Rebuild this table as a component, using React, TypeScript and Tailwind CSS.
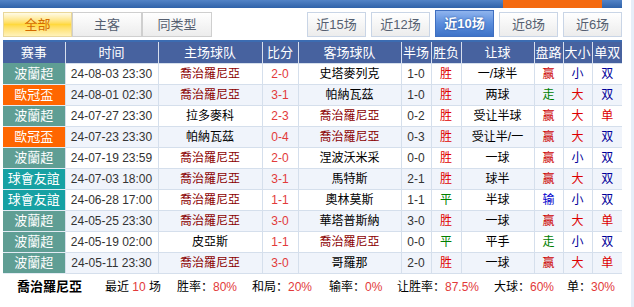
import React from "react";

type Row = {
    league: string;
    time: string;
    home: string;
    score: string;
    away: string;
    half: string;
    result: string;
    handicap: string;
    pan: string;
    size: string;
    oe: string;
};

const TEAM = "喬治羅尼亞";

const rows: Row[] = [
    { league: "波蘭超", time: "24-08-03 23:30", home: TEAM, score: "2-0", away: "史塔麥列克", half: "1-0", result: "胜", handicap: "一/球半", pan: "赢", size: "小", oe: "双" },
    { league: "歐冠盃", time: "24-08-01 02:30", home: TEAM, score: "3-1", away: "帕納瓦茲", half: "1-0", result: "胜", handicap: "两球", pan: "走", size: "大", oe: "双" },
    { league: "波蘭超", time: "24-07-27 23:30", home: "拉多麥科", score: "2-3", away: TEAM, half: "0-2", result: "胜", handicap: "受让半球", pan: "赢", size: "大", oe: "单" },
    { league: "歐冠盃", time: "24-07-23 23:30", home: "帕納瓦茲", score: "0-4", away: TEAM, half: "0-3", result: "胜", handicap: "受让半/一", pan: "赢", size: "大", oe: "双" },
    { league: "波蘭超", time: "24-07-19 23:59", home: TEAM, score: "2-0", away: "涅波沃米采", half: "0-0", result: "胜", handicap: "一球", pan: "赢", size: "小", oe: "双" },
    { league: "球會友誼", time: "24-07-03 18:00", home: TEAM, score: "3-1", away: "馬特斯", half: "2-1", result: "胜", handicap: "球半", pan: "赢", size: "大", oe: "双" },
    { league: "球會友誼", time: "24-06-28 17:00", home: TEAM, score: "1-1", away: "奧林莫斯", half: "1-1", result: "平", handicap: "半球", pan: "输", size: "小", oe: "双" },
    { league: "波蘭超", time: "24-05-25 23:30", home: TEAM, score: "3-0", away: "華塔普斯納", half: "3-0", result: "胜", handicap: "一球", pan: "赢", size: "大", oe: "单" },
    { league: "波蘭超", time: "24-05-19 02:00", home: "皮亞斯", score: "1-1", away: TEAM, half: "0-0", result: "平", handicap: "平手", pan: "走", size: "小", oe: "双" },
    { league: "波蘭超", time: "24-05-11 23:30", home: TEAM, score: "3-0", away: "哥羅那", half: "2-0", result: "胜", handicap: "一球", pan: "赢", size: "大", oe: "单" },
];

const leagueBg: Record<string, string> = {
    "波蘭超": "bg-[#5f9e94]",
    "歐冠盃": "bg-[#ff6600]",
    "球會友誼": "bg-[#16a1a3]",
};

const teamColor = (t: string) => (t === TEAM ? "text-[#8b0000]" : "text-black");
const resultColor = (r: string) => (r === "平" ? "text-[#008000]" : "text-[#e00000]");
const panColor = (p: string) =>
    p === "走" ? "text-[#008000]" : p === "输" ? "text-[#0000cc]" : "text-[#cc0000]";
const redBlue = (v: string, red: string) => (v === red ? "text-[#dd0000]" : "text-[#000099]");

const headers: [string, string][] = [
    ["赛事", "w-[62px]"],
    ["时间", "w-[93px]"],
    ["主场球队", "w-[104px]"],
    ["比分", "w-[36px]"],
    ["客场球队", "w-[103px]"],
    ["半场", "w-[30px]"],
    ["胜负", "w-[30px]"],
    ["让球", "w-[73px]"],
    ["盘路", "w-[29px]"],
    ["大小", "w-[29px]"],
    ["单双", "w-[30px]"],
];

const font = { fontFamily: '"Liberation Sans", Arial, "Noto Sans CJK SC", sans-serif' };

function Tab({ label, active, tone }: { label: string; active?: boolean; tone?: "yellow" | "blue" }) {
    if (active && tone === "yellow") {
        return (
            <div className="w-[69px] h-[25px] flex items-center justify-center border border-[#e9d79a] bg-gradient-to-b from-[#fffbe6] via-[#ffd93d] to-[#fff2b8] text-[#d46a00] text-[13px]">
                {label}
            </div>
        );
    }
    if (active) {
        return (
            <div className="w-[59px] h-[27px] -mt-[2px] flex items-center justify-center border border-[#3f6fc0] bg-gradient-to-b from-[#8fb4ee] via-[#5a8ddc] to-[#3e73c8] text-white font-bold text-[13px] [text-shadow:0_0_2px_#1d4a94]">
                {label}
            </div>
        );
    }
    return (
        <div
            className={`${tone === "yellow" ? "w-[70px] border-[#cfcfcf]" : "w-[59px] border-[#c9d5e6]"} h-[25px] flex items-center justify-center border bg-gradient-to-b from-white to-[#ececec] text-[#555f70] text-[13px]`}
        >
            {label}
        </div>
    );
}

export default function App() {
    return (
        <div className="w-[634px] h-[307px] bg-white overflow-hidden text-[12px] border-r-[3px] border-[#e6eef8]" style={font}>
            <div className="w-[622px] h-[8px] flex bg-gradient-to-b from-[#5283c6] to-[#2f62a9]">
                <div className="w-[503px]" />
                <div className="w-[99px] bg-[#f46a10]" />
            </div>
            <div className="w-[622px] h-[32px] flex items-end justify-between pl-[3px] pb-[3px]">
                <div className="flex">
                    <Tab label="全部" active tone="yellow" />
                    <Tab label="主客" tone="yellow" />
                    <Tab label="同类型" tone="yellow" />
                </div>
                <div className="flex gap-[5px] items-end">
                    <Tab label="近15场" />
                    <Tab label="近12场" />
                    <Tab label="近10场" active />
                    <Tab label="近8场" />
                    <Tab label="近6场" />
                </div>
            </div>
            <table className="ml-[3px] w-[619px] table-fixed border-collapse border-t-2 border-[#3c6cb2]">
                <thead>
                    <tr className="h-[22px] bg-[#47629f] text-white text-[13px]">
                        {headers.map(([h, w]) => (
                            <th key={h} className={`${w} font-normal p-0 border-x border-[#d7dfee] first:border-l-0 last:border-r-0`}>
                                {h}
                            </th>
                        ))}
                    </tr>
                </thead>
                <tbody>
                    {rows.map((r, i) => (
                        <tr key={i} className={`h-[21px] ${i % 2 === 1 ? "bg-[#f0f4fb]" : "bg-white"}`}>
                            <td className={`${leagueBg[r.league]} text-white text-center p-0 border-b border-[#e3ebf4] text-[13px]`}>{r.league}</td>
                            <td className="text-center text-[#333] p-0 border border-[#d5dfec]">{r.time}</td>
                            <td className={`text-center p-0 border border-[#d5dfec] ${teamColor(r.home)}`}>{r.home}</td>
                            <td className="text-center p-0 border border-[#d5dfec] text-[#e23a3a]">{r.score}</td>
                            <td className={`text-center p-0 border border-[#d5dfec] ${teamColor(r.away)}`}>{r.away}</td>
                            <td className="text-center p-0 border border-[#d5dfec] text-[#333]">{r.half}</td>
                            <td className={`text-center p-0 border border-[#d5dfec] ${resultColor(r.result)}`}>{r.result}</td>
                            <td className="text-center p-0 border border-[#d5dfec] text-black">{r.handicap}</td>
                            <td className={`text-center p-0 border border-[#d5dfec] ${panColor(r.pan)}`}>{r.pan}</td>
                            <td className={`text-center p-0 border border-[#d5dfec] ${redBlue(r.size, "大")}`}>{r.size}</td>
                            <td className={`text-center p-0 border border-[#d5dfec] border-r-0 ${redBlue(r.oe, "单")}`}>{r.oe}</td>
                        </tr>
                    ))}
                </tbody>
            </table>
            <div className="flex items-center h-[27px] pl-[17px] text-[12px] text-black whitespace-nowrap">
                <span className="font-bold text-[13px] w-[88px] shrink-0">{TEAM}</span>
                <span className="w-[72px] shrink-0">最近 <span className="text-[#e23a3a]">10</span> 场</span>
                <span className="w-[75px] shrink-0">胜率：<span className="text-[#e23a3a]">80%</span></span>
                <span className="w-[77px] shrink-0">和局：<span className="text-[#e23a3a]">20%</span></span>
                <span className="w-[68px] shrink-0">输率：<span className="text-[#e23a3a]">0%</span></span>
                <span className="w-[97px] shrink-0">让胜率：<span className="text-[#e23a3a]">87.5%</span></span>
                <span className="w-[73px] shrink-0">大球：<span className="text-[#e23a3a]">60%</span></span>
                <span className="shrink-0">单：<span className="text-[#e23a3a]">30%</span></span>
            </div>
        </div>
    );
}
